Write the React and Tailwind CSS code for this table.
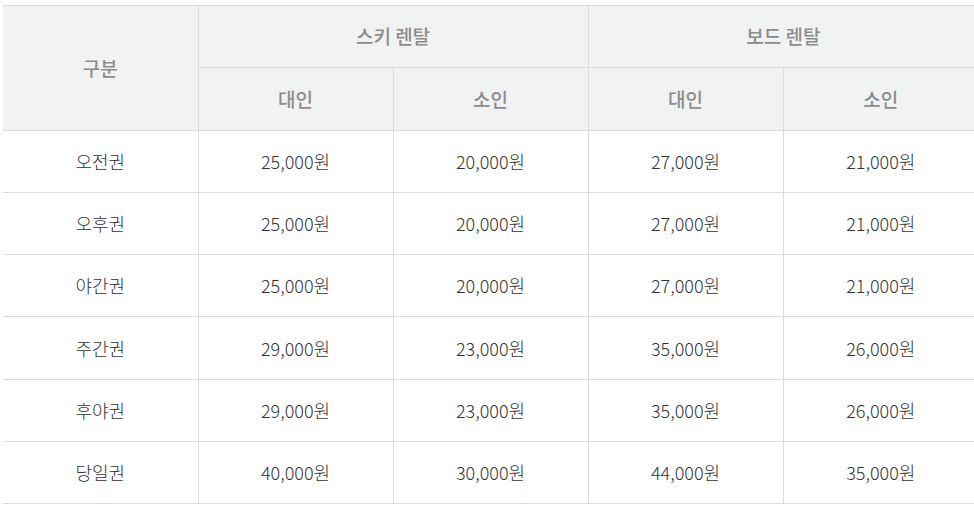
import React from "react";

const rows = [
  ["오전권", "25,000원", "20,000원", "27,000원", "21,000원"],
  ["오후권", "25,000원", "20,000원", "27,000원", "21,000원"],
  ["야간권", "25,000원", "20,000원", "27,000원", "21,000원"],
  ["주간권", "29,000원", "23,000원", "35,000원", "26,000원"],
  ["후야권", "29,000원", "23,000원", "35,000원", "26,000원"],
  ["당일권", "40,000원", "30,000원", "44,000원", "35,000원"],
];

export default function App() {
  const font = { fontFamily: '"Noto Sans CJK KR", "Noto Sans", sans-serif' };
  const th = "bg-[#f1f2f2] border-[#dcdcdc] font-medium text-[#8c8c8c] text-center text-[19px]";
  return (
    <div className="w-[974px] h-[508px] overflow-hidden bg-white pl-[3px] pt-[5px]" style={font}>
      <table className="w-[975px] table-fixed border-collapse text-[18px]">
        <colgroup>
          <col className="w-[195px]" />
          <col className="w-[195px]" />
          <col className="w-[195px]" />
          <col className="w-[195px]" />
          <col className="w-[195px]" />
        </colgroup>
        <thead>
          <tr className="h-[62px]">
            <th rowSpan={2} className={th + " border-t border-b border-r"}>
              구분
            </th>
            <th colSpan={2} className={th + " border"}>
              스키 렌탈
            </th>
            <th colSpan={2} className={th + " border-t border-b border-l"}>
              보드 렌탈
            </th>
          </tr>
          <tr className="h-[63px]">
            <th className={th + " border"}>대인</th>
            <th className={th + " border"}>소인</th>
            <th className={th + " border"}>대인</th>
            <th className={th + " border-t border-b border-l"}>소인</th>
          </tr>
        </thead>
        <tbody>
          {rows.map((r, i) => (
            <tr key={i} className={i === 3 ? "h-[63px]" : "h-[62px]"}>
              {r.map((c, j) => (
                <td
                  key={j}
                  className={
                    (j === 0
                      ? "border-t border-b border-r"
                      : j === 4
                      ? "border-t border-b border-l"
                      : "border") +
                    " border-[#dcdcdc] text-center text-[#333333] font-light"
                  }
                >
                  {c}
                </td>
              ))}
            </tr>
          ))}
        </tbody>
      </table>
    </div>
  );
}
